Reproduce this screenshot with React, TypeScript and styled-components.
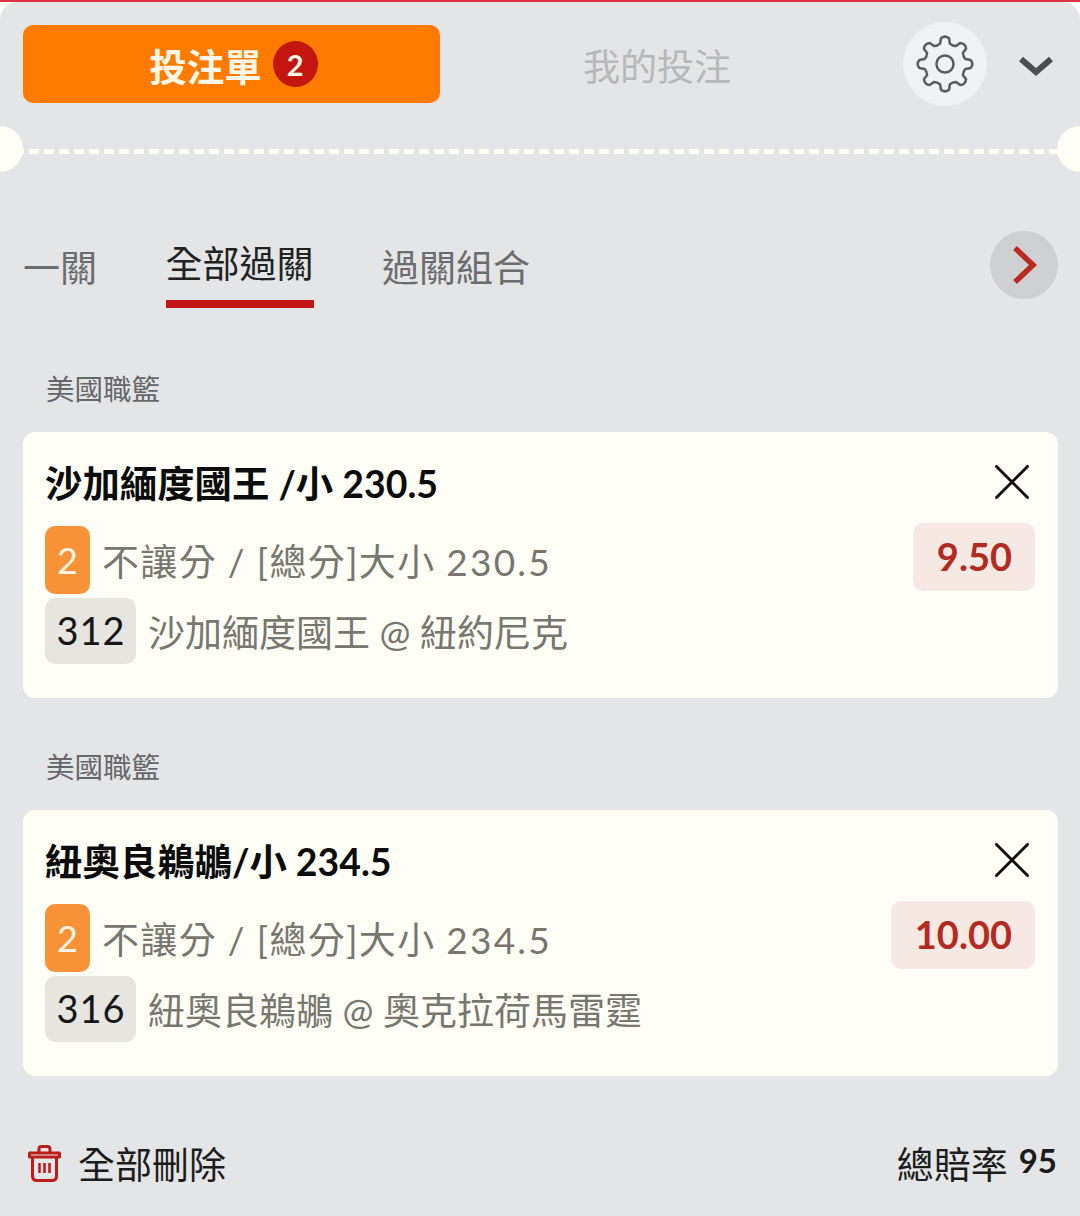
import React from 'react'
import styled, { createGlobalStyle } from 'styled-components'

const FONT = `Lato, "Noto Sans CJK TC", "Noto Sans", sans-serif`

interface IBet {
    id: number
    league: string
    title: string
    line: string
    total: string
    code: string
    match: string
    odds: string
}

const bets: IBet[] = [
    { id: 1, league: '美國職籃', title: '沙加緬度國王 /小 230.5', line: '不讓分 / [總分]大小 ', total: '230.5', code: '312', match: '沙加緬度國王 @ 紐約尼克', odds: '9.50' },
    { id: 2, league: '美國職籃', title: '紐奧良鵜鶘/小 234.5', line: '不讓分 / [總分]大小 ', total: '234.5', code: '316', match: '紐奧良鵜鶘 @ 奧克拉荷馬雷霆', odds: '10.00' },
]

const gearPath = () => {
    const teeth = 8
    const cx = 30
    const cy = 30
    const outer = 27.5
    const inner = 21
    const pts: string[] = []
    for (let i = 0; i < teeth; i++) {
        const a = (i / teeth) * Math.PI * 2 - Math.PI / 2
        const step = (Math.PI * 2) / teeth
        const at = (r: number, o: number) => `${(cx + r * Math.cos(a + o * step)).toFixed(2)} ${(cy + r * Math.sin(a + o * step)).toFixed(2)}`
        pts.push(`${i === 0 ? 'M' : 'L'}${at(inner, -0.3)}`)
        pts.push(`L${at(outer - 1.5, -0.2)}`)
        pts.push(`Q${at(outer + 1.5, 0)} ${at(outer - 1.5, 0.2)}`)
        pts.push(`L${at(inner, 0.3)}`)
        pts.push(`Q${at(inner - 1.5, 0.5)} ${at(inner, 0.7)}`)
    }
    return pts.join(' ') + 'Z'
}

const GearIcon = () => (
    <svg width="60" height="60" viewBox="0 0 60 60" fill="none" stroke="#5a5b5e" strokeWidth="2.5" strokeLinejoin="round">
        <path d={gearPath()} />
        <circle cx="30" cy="30" r="8.5" />
    </svg>
)

const ChevronDown = () => (
    <svg width="34" height="24" viewBox="0 0 34 24" fill="none" stroke="#4c4d4f" strokeWidth="6">
        <path d="M2 4 L17 17 L32 4" />
    </svg>
)

const ChevronRight = () => (
    <svg width="26" height="40" viewBox="0 0 26 40" fill="none" stroke="#bb2a20" strokeWidth="5.5">
        <path d="M4 3 L22 20 L4 37" />
    </svg>
)

const CloseIcon = () => (
    <svg width="34" height="34" viewBox="0 0 34 34" fill="none" stroke="#111" strokeWidth="3" strokeLinecap="round">
        <path d="M1.5 1.5 L32.5 32.5 M32.5 1.5 L1.5 32.5" />
    </svg>
)

const TrashIcon = () => (
    <svg width="33" height="37" viewBox="0 0 33 37" fill="none" stroke="#bb1e1a" strokeWidth="3">
        <path d="M1.5 8 H31.5 V12 H1.5 Z" strokeLinejoin="round" />
        <path d="M11 8 V4 Q11 1.5 13.5 1.5 H19.5 Q22 1.5 22 4 V8" />
        <path d="M4.5 12 V31 Q4.5 35.5 9 35.5 H24 Q28.5 35.5 28.5 31 V12" />
        <path d="M11.5 18 V28 M16.5 18 V28 M21.5 18 V28" strokeWidth="2.6" />
    </svg>
)

const App = () => {
    return (
        <>
            <GlobalStyle />
            <Frame>
                <Sheet>
                    <Header>
                        <ActiveHeaderTab>
                            投注單
                            <CountBadge>2</CountBadge>
                        </ActiveHeaderTab>
                        <HeaderTab>我的投注</HeaderTab>
                        <SettingsButton><GearIcon /></SettingsButton>
                        <CollapseButton><ChevronDown /></CollapseButton>
                    </Header>
                    <TicketDivider />
                    <TabsRow>
                        <TabList>
                            <Tab>一關</Tab>
                            <Tab $active>全部過關</Tab>
                            <Tab>過關組合</Tab>
                        </TabList>
                        <NextButton><ChevronRight /></NextButton>
                    </TabsRow>
                    {bets.map((bet) => (
                        <Section key={bet.id}>
                            <League>{bet.league}</League>
                            <BetCard>
                                <BetInfo>
                                    <BetTitle>{bet.title}</BetTitle>
                                    <MetaRow>
                                        <CountTag>2</CountTag>
                                        <MetaText $spaced>{bet.line}<LineTotal>{bet.total}</LineTotal></MetaText>
                                    </MetaRow>
                                    <MetaRow $second>
                                        <CodeTag>{bet.code}</CodeTag>
                                        <MetaText>{bet.match}</MetaText>
                                    </MetaRow>
                                </BetInfo>
                                <BetSide>
                                    <CloseButton><CloseIcon /></CloseButton>
                                    <Odds>{bet.odds}</Odds>
                                </BetSide>
                            </BetCard>
                        </Section>
                    ))}
                    <Footer>
                        <DeleteAll>
                            <TrashIcon />
                            全部刪除
                        </DeleteAll>
                        <TotalOdds>
                            總賠率
                            <strong>95</strong>
                        </TotalOdds>
                    </Footer>
                </Sheet>
            </Frame>
        </>
    )
}

const GlobalStyle = createGlobalStyle`
    html, body {
        margin: 0;
        padding: 0;
        background: #e4e5e7;
    }
    * {
        box-sizing: border-box;
    }
`

const Frame = styled.div`
    width: 1080px;
    height: 1216px;
    overflow: hidden;
    background: #fffef6;
    border-top: 2px solid #dc3340;
    font-family: ${FONT};
`

const Sheet = styled.div`
    height: 100%;
    background: #e4e5e7;
    border-radius: 18px 18px 0 0;
    padding-top: 23px;
`

const Header = styled.div`
    display: flex;
    align-items: flex-start;
    height: 78px;
    padding-left: 23px;
`

const ActiveHeaderTab = styled.div`
    width: 417px;
    height: 78px;
    padding-left: 4px;
    border-radius: 10px;
    background: #ff7b00;
    color: #fff6e8;
    font-size: 37.5px;
    font-weight: 700;
    display: flex;
    align-items: center;
    justify-content: center;
    gap: 11px;
`

const CountBadge = styled.span`
    width: 45px;
    height: 46px;
    border-radius: 50%;
    background: #c2160f;
    color: #fff6e8;
    font-size: 29px;
    font-weight: 700;
    display: flex;
    align-items: center;
    justify-content: center;
`

const HeaderTab = styled.div`
    width: 434px;
    height: 80px;
    color: #b6b8ba;
    font-size: 37px;
    display: flex;
    align-items: center;
    justify-content: center;
`

const SettingsButton = styled.div`
    width: 84px;
    height: 84px;
    margin: -3px 0 0 29px;
    border-radius: 50%;
    background: #f0f1f3;
    display: flex;
    align-items: center;
    justify-content: center;
`

const CollapseButton = styled.div`
    width: 34px;
    height: 24px;
    margin: 30px 0 0 32px;
`

const TicketDivider = styled.div`
    position: relative;
    height: 5px;
    margin-top: 46px;
    background: repeating-linear-gradient(90deg, #fffef6 0 10px, transparent 10px 15px);
    background-position: 29px 0;

    &::before,
    &::after {
        content: '';
        position: absolute;
        top: -23px;
        width: 46px;
        height: 46px;
        border-radius: 50%;
        background: #fffef6;
    }
    &::before {
        left: -23px;
    }
    &::after {
        right: -23px;
    }
`

const TabsRow = styled.div`
    display: flex;
    align-items: flex-start;
    justify-content: space-between;
    height: 78px;
    margin-top: 77px;
    padding: 0 22px 0 23px;
`

const TabList = styled.div`
    display: flex;
    align-items: flex-start;
    gap: 68.5px;
    padding-top: 11px;
`

const Tab = styled.div<{ $active?: boolean }>`
    font-size: 37px;
    line-height: 44px;
    color: ${(props) => (props.$active ? '#222' : '#6b6c6e')};
    padding-top: ${(props) => (props.$active ? '0' : '4px')};
    padding-bottom: ${(props) => (props.$active ? '14px' : '0')};
    border-bottom: ${(props) => (props.$active ? '8px solid #c2161a' : 'none')};
`

const NextButton = styled.div`
    width: 68px;
    height: 68px;
    border-radius: 50%;
    background: #cfd0d2;
    display: flex;
    align-items: center;
    justify-content: center;
`

const Section = styled.section`
    margin-top: 61px;

    & + & {
        margin-top: 50px;
    }
`

const League = styled.div`
    font-size: 28.5px;
    line-height: 38px;
    color: #66676a;
    padding-left: 46px;
`

const BetCard = styled.div`
    display: flex;
    justify-content: space-between;
    height: 266px;
    margin: 24px 22px 0 23px;
    padding: 30px 23px 0 22px;
    border-radius: 12px;
    background: #fffef6;
`

const BetInfo = styled.div`
    display: flex;
    flex-direction: column;
`

const BetTitle = styled.div`
    font-size: 37.4px;
    line-height: 44px;
    font-weight: 700;
    color: #0c0c0c;
    margin-bottom: 20px;
`

const MetaRow = styled.div<{ $second?: boolean }>`
    display: flex;
    align-items: center;
    gap: 12px;
    margin-top: ${(props) => (props.$second ? '4px' : '0')};
`

const CountTag = styled.span`
    width: 45px;
    height: 68px;
    border-radius: 10px;
    background: #f79336;
    color: #fff6e8;
    font-size: 36px;
    display: flex;
    align-items: center;
    justify-content: center;
`

const CodeTag = styled.span`
    width: 91px;
    height: 66px;
    padding: 0 0 2px 1px;
    border-radius: 10px;
    background: #e6e5e0;
    color: #161616;
    font-size: 38px;
    letter-spacing: 1px;
    display: flex;
    align-items: center;
    justify-content: center;
`

const MetaText = styled.span<{ $spaced?: boolean }>`
    font-size: 37px;
    color: #77776f;
    letter-spacing: ${(props) => (props.$spaced ? '1.35px' : '0')};
    white-space: pre;
`

const LineTotal = styled.span`
    letter-spacing: 2.2px;
`

const BetSide = styled.div`
    display: flex;
    flex-direction: column;
    align-items: flex-end;
    padding-top: 3px;
`

const CloseButton = styled.div`
    width: 34px;
    height: 34px;
    margin-right: 6px;
    margin-bottom: 24px;
`

const Odds = styled.div`
    height: 68px;
    padding: 0 23px 2px 24px;
    border-radius: 10px;
    background: #f6e8e3;
    color: #b22a20;
    font-size: 38px;
    font-weight: 700;
    display: flex;
    align-items: center;
`

const Footer = styled.div`
    display: flex;
    align-items: center;
    justify-content: space-between;
    height: 44px;
    margin-top: 65px;
    padding: 0 23px 0 28px;
`

const DeleteAll = styled.div`
    display: flex;
    align-items: center;
    gap: 17px;
    font-size: 37px;
    color: #1c1c1c;
`

const TotalOdds = styled.div`
    display: flex;
    align-items: center;
    gap: 11px;
    font-size: 37px;
    color: #1c1c1c;

    strong {
        font-size: 33px;
        font-weight: 700;
        margin-bottom: 6px;
    }
`

export default App
